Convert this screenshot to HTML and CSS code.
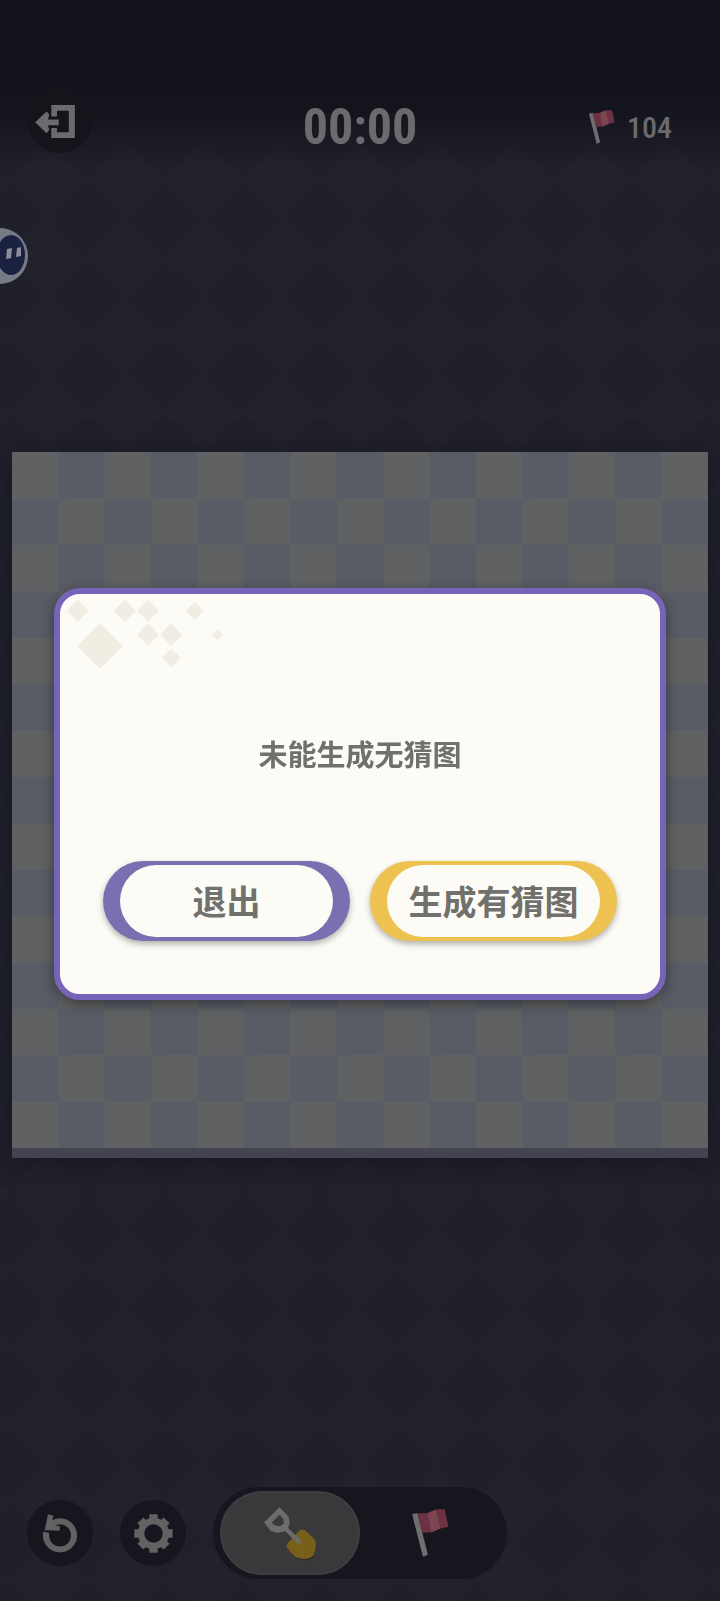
FILE: index.html
```html
<!DOCTYPE html>
<html lang="zh-CN">
<head>
    <meta charset="UTF-8">
    <meta name="viewport" content="width=device-width, initial-scale=1.0">
    <title>扫雷</title>
    <link rel="stylesheet" href="styles.css">
</head>
<body>
    <!-- Shared flag icon -->
    <svg class="sprite" aria-hidden="true">
        <symbol id="flag" viewBox="0 0 112 146">
            <path fill="#6f6f70" d="M0 16 16 12 48 139 33 145z"/>
            <path fill="#6d3143" d="M16 14 48 12 76 1 99 1 111 54 86 59 58 71 31 72z"/>
            <path fill="#7b4652" d="M48 12 72 2 86 59 58 71z"/>
        </symbol>
    </svg>

    <header class="topbar">
        <button class="round-btn exit" aria-label="返回">
            <svg width="40" height="33" viewBox="0 0 118 98" fill="#6b6b6d">
                <path d="M48 0H118V98H48V68H65V81H100V17H65V34H48z"/>
                <path d="M0 51 34 19 42 28 38 43H70V60H38L42 74 34 84z"/>
            </svg>
        </button>
        <div class="timer">00:00</div>
        <div class="flags">
            <svg width="26" height="34"><use href="#flag"/></svg>
            <span>104</span>
        </div>
    </header>

    <main class="game">
        <div class="board"></div>
    </main>

    <footer class="toolbar">
        <button class="round-btn" aria-label="重新开始">
            <svg width="36" height="40" viewBox="0 0 108 120">
                <path d="M13 58A42 42 0 1 0 31 32" fill="none" stroke="#626263" stroke-width="18"/>
                <path d="M18 4 34 8 31 22 46 18 38 38 53 38 53 53 8 52z" fill="#626263"/>
            </svg>
        </button>
        <button class="round-btn" aria-label="设置">
            <svg width="39" height="39" viewBox="-58 -58 116 116" fill="none" stroke="#626263">
                <circle r="37" stroke-width="19"/>
                <path stroke-width="25" d="M0-57V-38M0 57V38M-57 0H-38M57 0H38M-39-39-26-26M39 39 26 26M-39 39-26 26M39-39 26-26"/>
            </svg>
        </button>
        <div class="mode-switch">
            <button class="mode active" aria-label="挖掘">
                <svg width="52" height="52" viewBox="198 109 156 156">
                    <path fill="#2e2e30" d="M270 234 292 262 322 270 348 262 340 250z"/>
                    <path fill="#79601a" d="M303 181Q313 173 323 180L349 205Q355 212 352 236L345 255Q335 266 312 264L293 259Q285 255 266 230 264 221 276 210z"/>
                    <path fill="#6c6c6d" fill-rule="evenodd" d="M245 110 272 138 275 158 270 172 304 204 313 222 294 214 262 182 240 187 218 181 198 155zM244 132 257 146 257 159 245 167 230 164 221 156z"/>
                </svg>
            </button>
            <button class="mode" aria-label="插旗">
                <svg width="37" height="48"><use href="#flag"/></svg>
            </button>
        </div>
    </footer>

    <!-- Half hidden floating assistant -->
    <button class="assistant" aria-label="助手">
        <svg width="28" height="56" viewBox="0 0 28 56">
            <circle cx="0" cy="28" r="28" fill="#777b86"/>
            <ellipse cx="11" cy="27" rx="14" ry="20" fill="#1b2140"/>
            <path fill="#8b8e99" d="M7 21 12 20 11 30 6 31zM17 20 21 19 21 28 16 29z"/>
        </svg>
    </button>

    <div class="overlay">
        <div class="dialog" role="dialog" aria-modal="true" aria-labelledby="message">
            <svg class="pattern" width="160" height="72" viewBox="0 0 480 216" fill="#f0eee3" aria-hidden="true">
                <path d="M53 17 86 50 53 84 20 50zM194 17 227 50 194 84 161 50zM264 17 297 50 264 84 231 50zM404 24 430 50 404 77 377 50zM120 88 189 156 120 224 52 156zM264 88 297 122 264 155 231 122zM334 88 367 122 334 155 301 122zM472 106 488 122 472 137 457 122zM334 164 362 191 334 219 305 191z"/>
            </svg>
            <p class="message" id="message">未能生成无猜图</p>
            <div class="actions">
                <button class="choice">退出</button>
                <button class="choice yellow">生成有猜图</button>
            </div>
        </div>
    </div>
</body>
</html>
```

FILE: styles.css
```css
* {
    box-sizing: border-box;
}

body {
    margin: 0;
    min-height: 100vh;
    display: flex;
    flex-direction: column;
    overflow-x: hidden;
    font-family: "Noto Sans CJK SC", sans-serif;
    /* diamond pattern */
    background: repeating-conic-gradient(from 45deg, #22222d 0 25%, #20202b 0 50%) 48px 219px / 10.8vw 10.8vw;
}

button {
    padding: 0;
    border: none;
    background: none;
    font-family: inherit;
    cursor: pointer;
}

svg {
    display: block;
    overflow: visible;
}

.sprite {
    position: absolute;
    width: 0;
    height: 0;
}

/* Top bar */
.topbar {
    display: grid;
    grid-template-columns: 1fr auto 1fr;
    align-items: center;
    height: 168px;
    padding: 86px 48px 0 48px;
    background: linear-gradient(#12121b, #14141d 65%, rgba(20, 20, 29, 0));
    color: #6b6b6d;
    font-family: "Liberation Sans Narrow", "Roboto Condensed", Roboto, sans-serif;
    font-weight: bold;
}

.round-btn {
    display: flex;
    align-items: center;
    justify-content: center;
    width: 66px;
    height: 66px;
    border-radius: 50%;
    background: #16161f;
}

.exit {
    width: 64px;
    height: 64px;
    margin: 0 0 12px -20px;
    padding-right: 10px;
    background: #14141b;
}

.timer {
    font-size: 50px;
    line-height: 64px;
}

.flags {
    display: flex;
    justify-content: flex-end;
    align-items: center;
    gap: 12px;
    font-size: 30px;
    font-weight: 500;
}

/* Board, 15 x 15 cells */
.game {
    flex: 1;
    display: flex;
    flex-direction: column;
    justify-content: center;
    padding: 0 12px 45px;
}

.board {
    aspect-ratio: 1;
    box-sizing: content-box;
    border-bottom: 10px solid #43444f;
    background: repeating-conic-gradient(#595c65 0 25%, #606163 0 50%) 0 0 / calc(200% / 15) calc(200% / 15);
    background-origin: content-box;
    box-shadow: 0 4px 24px #181821;
}

/* Bottom tools */
.toolbar {
    display: flex;
    align-items: center;
    gap: 27px;
    padding: 0 27px 22px;
}

.mode-switch {
    display: flex;
    padding: 4px 7px;
    border-radius: 46px;
    background: #16161f;
}

.mode {
    display: flex;
    align-items: center;
    justify-content: center;
    width: 140px;
    height: 84px;
    border-radius: 42px;
}

.mode.active {
    border: 2px solid #3f3f41;
    background: #39393b;
}

.assistant {
    position: absolute;
    left: 0;
    top: 228px;
}

/* Dialog */
.overlay {
    position: fixed;
    inset: 0;
    display: flex;
    align-items: center;
    justify-content: center;
    padding: 0 54px 13px;
}

.dialog {
    position: relative;
    width: 100%;
    padding: 136px 43px 53px;
    border: 6px solid #7664b8;
    border-radius: 26px;
    background: #fcfbf5;
    box-shadow: 0 4px 14px rgba(0, 0, 0, 0.4);
}

.pattern {
    position: absolute;
    left: 0;
    top: 0;
}

.message {
    margin: 0 0 85px;
    text-align: center;
    font-size: 29px;
    line-height: 46px;
    font-weight: bold;
    color: #70706d;
}

.actions {
    display: grid;
    grid-template-columns: 1fr 1fr;
    gap: 20px;
}

.choice {
    position: relative;
    z-index: 0;
    height: 80px;
    border-radius: 40px;
    background: #7b6eb1;
    box-shadow: 0 3px 6px rgba(0, 0, 0, 0.3);
    font-size: 34px;
    line-height: 76px;
    font-weight: bold;
    color: #70706d;
}

/* the inner pill is drawn over the coloured one */
.choice::before {
    content: "";
    position: absolute;
    inset: 4px 17px;
    z-index: -1;
    border-radius: 36px;
    background: #fcfbf5;
}

.yellow {
    background: #eec250;
}
```
